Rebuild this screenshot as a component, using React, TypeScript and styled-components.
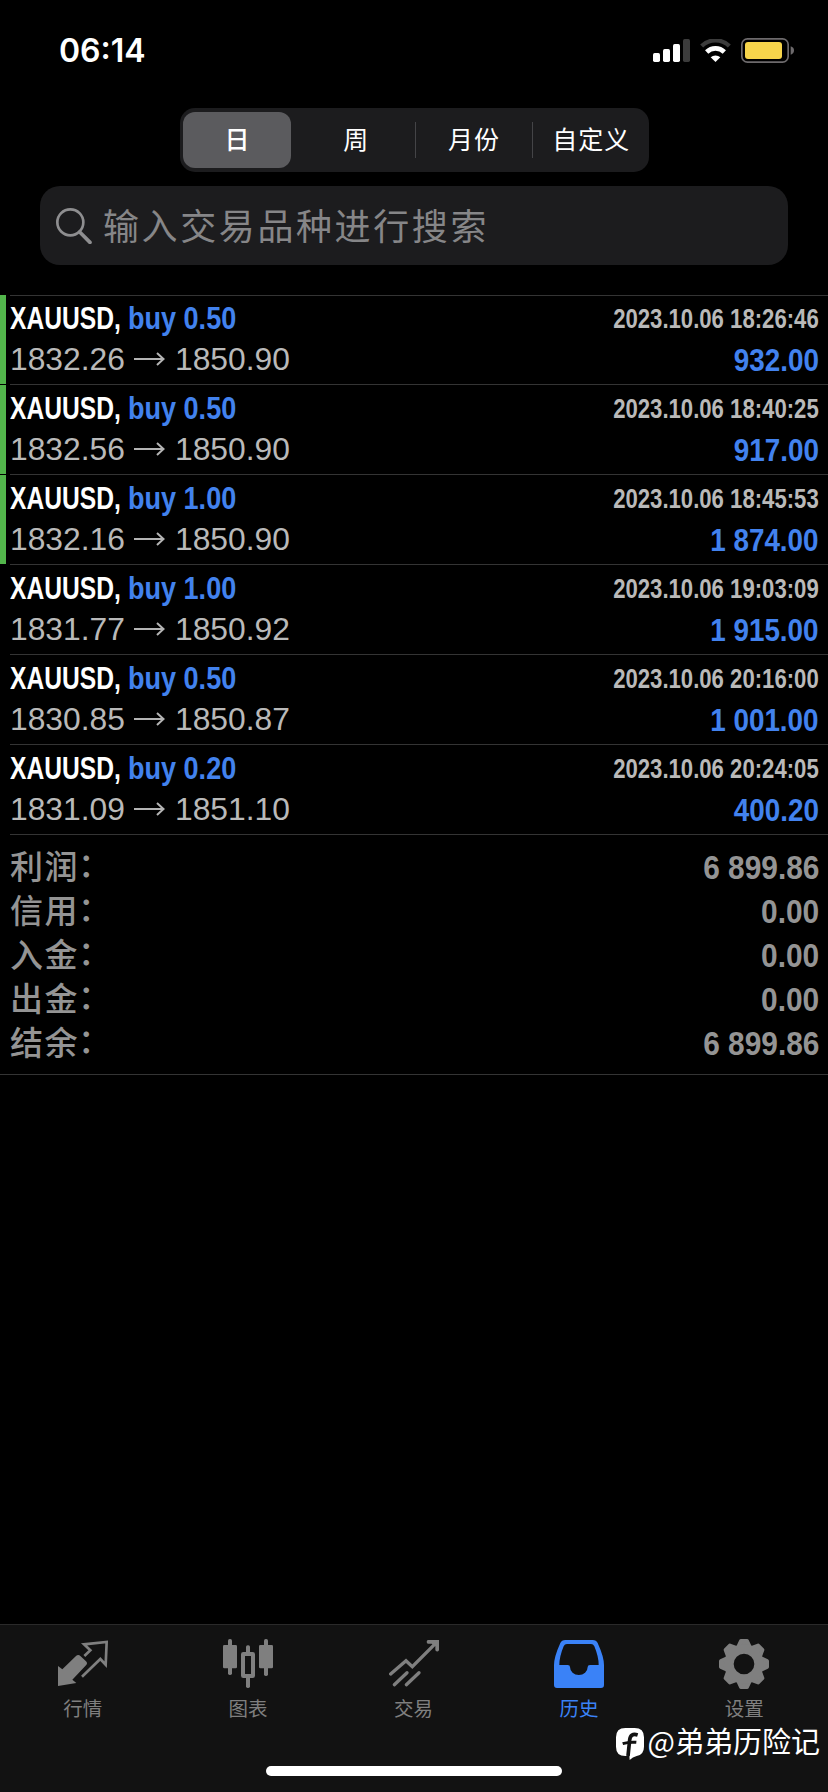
import React from 'react';
import styled, { createGlobalStyle } from 'styled-components';

const deals = [
    { volume: '0.50', open: '1832.26', close: '1850.90', time: '2023.10.06 18:26:46', profit: '932.00', marked: true },
    { volume: '0.50', open: '1832.56', close: '1850.90', time: '2023.10.06 18:40:25', profit: '917.00', marked: true },
    { volume: '1.00', open: '1832.16', close: '1850.90', time: '2023.10.06 18:45:53', profit: '1 874.00', marked: true },
    { volume: '1.00', open: '1831.77', close: '1850.92', time: '2023.10.06 19:03:09', profit: '1 915.00', marked: false },
    { volume: '0.50', open: '1830.85', close: '1850.87', time: '2023.10.06 20:16:00', profit: '1 001.00', marked: false },
    { volume: '0.20', open: '1831.09', close: '1851.10', time: '2023.10.06 20:24:05', profit: '400.20', marked: false },
];

const totals = [
    { label: '利润', value: '6 899.86' },
    { label: '信用', value: '0.00' },
    { label: '入金', value: '0.00' },
    { label: '出金', value: '0.00' },
    { label: '结余', value: '6 899.86' },
];

const tabs = [
    { label: '行情', icon: <QuotesIcon /> },
    { label: '图表', icon: <ChartIcon /> },
    { label: '交易', icon: <TradeIcon /> },
    { label: '历史', icon: <HistoryIcon />, active: true },
    { label: '设置', icon: <SettingsIcon /> },
];

const periods = ['日', '周', '月份', '自定义'];

export default function App() {
    return (
        <>
            <GlobalStyle />
            <Screen>
                <StatusBar>
                    <Clock>06:14</Clock>
                    <StatusIcons>
                        <SignalIcon />
                        <WifiIcon />
                        <BatteryIcon />
                    </StatusIcons>
                </StatusBar>

                <Segmented>
                    {periods.map((period, i) => (
                        <Segment key={period} $active={i === 0} $divided={i > 1}>
                            <span>{period}</span>
                        </Segment>
                    ))}
                </Segmented>

                <SearchField>
                    <SearchIcon />
                    <Placeholder>输入交易品种进行搜索</Placeholder>
                </SearchField>

                <DealList>
                    {deals.map((deal) => (
                        <DealRow key={deal.time}>
                            <Marker $visible={deal.marked} />
                            <DealBody>
                                <DealLine>
                                    <DealTitle>
                                        <SymbolName>
                                            <Condensed $ratio={0.77}>XAUUSD,</Condensed>
                                        </SymbolName>
                                        <Side>
                                            <Condensed $ratio={0.845}>buy {deal.volume}</Condensed>
                                        </Side>
                                    </DealTitle>
                                    <Time>
                                        <Condensed $ratio={0.82} $right>{deal.time}</Condensed>
                                    </Time>
                                </DealLine>
                                <DealLine>
                                    <Prices>
                                        <span>{deal.open}</span>
                                        <ArrowIcon />
                                        <span>{deal.close}</span>
                                    </Prices>
                                    <Profit>
                                        <Condensed $ratio={0.87} $right>{deal.profit}</Condensed>
                                    </Profit>
                                </DealLine>
                            </DealBody>
                        </DealRow>
                    ))}
                </DealList>

                <Totals>
                    <TotalsDivider />
                    {totals.map((row) => (
                        <TotalRow key={row.label}>
                            <TotalLabel>
                                {row.label}
                                <Colon>：</Colon>
                            </TotalLabel>
                            <TotalValue>
                                <Condensed $ratio={0.905} $right>{row.value}</Condensed>
                            </TotalValue>
                        </TotalRow>
                    ))}
                </Totals>

                <TabBar>
                    <Tabs>
                        {tabs.map((tab) => (
                            <Tab key={tab.label} $active={tab.active}>
                                {tab.icon}
                                <TabLabel>{tab.label}</TabLabel>
                            </Tab>
                        ))}
                    </Tabs>
                    <HomeIndicator />
                    <Watermark>
                        <WatermarkLogo />
                        <span>@弟弟历险记</span>
                    </Watermark>
                </TabBar>
            </Screen>
        </>
    );
}

function SignalIcon() {
    return (
        <svg width="37" height="23" viewBox="0 0 111 69" fill="#fff">
            <rect x="0" y="42" width="21" height="27" rx="5" />
            <rect x="30" y="30" width="21" height="39" rx="5" />
            <rect x="60" y="15" width="21" height="54" rx="5" />
            <rect x="90" y="0" width="21" height="69" rx="5" fill="#3c3c3c" />
        </svg>
    );
}

function WifiIcon() {
    return (
        <svg width="31" height="23" viewBox="0 0 93 69">
            <path d="M5 21a60 60 0 0 1 83 0" fill="none" stroke="#3c3c3c" strokeWidth="13" />
            <path d="M20 39a38 38 0 0 1 53 0" fill="none" stroke="#fff" strokeWidth="14" />
            <path d="M46.5 69L32 55a21 21 0 0 1 29 0z" fill="#fff" />
        </svg>
    );
}

function BatteryIcon() {
    return (
        <svg width="53" height="25" viewBox="0 0 159 75">
            <rect x="2.5" y="2.5" width="139" height="70" rx="17" fill="none" stroke="#6d6a6c" strokeWidth="5" />
            <rect x="12" y="12" width="111" height="51" rx="9" fill="#f7d54b" />
            <path d="M149 25q10 3 10 12.500t-10 12.500z" fill="#6d6a6c" />
        </svg>
    );
}

function SearchIcon() {
    return (
        <svg width="36" height="36" viewBox="0 0 108 108" fill="none" stroke="#8e8e90">
            <circle cx="43" cy="43" r="39" strokeWidth="8" />
            <path d="M71 72L102 103" strokeWidth="11" strokeLinecap="round" />
        </svg>
    );
}

function ArrowIcon() {
    return (
        <svg width="31" height="14" viewBox="0 0 31 14" fill="none" stroke="#b4b4b4" strokeWidth="2">
            <path d="M0 7H29.500M23 1L29.500 7L23 13" />
        </svg>
    );
}

function QuotesIcon() {
    return (
        <svg width="50" height="50" viewBox="0 0 150 150">
            <path
                d="M0 81L13 91L54 51Q61 45 68 52L84 67Q90 73 84 79L43 122L55 132L0 141z"
                fill="currentColor"
            />
            <path
                d="M79 51L97 34L78 16L146 9L143 77L127 60L72 113"
                fill="none"
                stroke="currentColor"
                strokeWidth="8"
            />
        </svg>
    );
}

function ChartIcon() {
    return (
        <svg width="50" height="50" viewBox="0 0 150 150" fill="currentColor">
            <rect x="15" y="0" width="12" height="108" rx="5" />
            <rect x="0" y="18" width="42" height="70" rx="4" />
            <rect x="69" y="19" width="12" height="26" rx="5" />
            <rect x="69" y="112" width="12" height="35" rx="5" />
            <rect x="60" y="45" width="30" height="66" rx="1" fill="none" stroke="currentColor" strokeWidth="12" />
            <rect x="123" y="0" width="12" height="111" rx="5" />
            <rect x="108" y="18" width="42" height="70" rx="4" />
        </svg>
    );
}

function TradeIcon() {
    return (
        <svg width="50" height="50" viewBox="0 0 150 150" fill="none" stroke="currentColor" strokeWidth="10" strokeLinecap="round">
            <path d="M5 105L51 65L70 83L142 11" strokeLinejoin="miter" />
            <path d="M16 137L54 101M52 137L90 101" />
            <path d="M116 3H150V34Q145 41 139 34V22L128 14H116Q110 9 116 3z" fill="currentColor" stroke="none" />
        </svg>
    );
}

function HistoryIcon() {
    return (
        <svg width="50" height="50" viewBox="0 0 150 150" fill="currentColor" fillRule="evenodd">
            <path d="M34 3H116Q127 3 131 12Q150 54 150 78V138Q150 147 141 147H9Q0 147 0 138V78Q0 54 19 12Q23 3 34 3zM39 15Q32 15 29 22Q16 53 16 78H41Q48 78 48 84A26.500 24 0 0 0 101 84Q101 78 108 78H134Q134 53 121 22Q118 15 111 15z" />
        </svg>
    );
}

function SettingsIcon() {
    return (
        <svg width="50" height="50" viewBox="0 0 150 150" fill="currentColor">
            {[0, 45, 90, 135, 180, 225, 270, 315].map((angle) => (
                <path
                    key={angle}
                    d="M66 6H84L93 26H57z"
                    stroke="currentColor"
                    strokeWidth="12"
                    strokeLinejoin="round"
                    transform={`rotate(${angle} 75 75)`}
                />
            ))}
            <circle cx="75" cy="75" r="45" fill="none" stroke="currentColor" strokeWidth="28" />
        </svg>
    );
}

function WatermarkLogo() {
    return (
        <svg width="28" height="32" viewBox="0 0 84 96">
            <path d="M28 0H56Q84 0 84 28V56Q84 80 62 84Q50 87 41 96L40 84H28Q0 84 0 56V28Q0 0 28 0z" fill="#fff" />
            <path d="M65 21Q43 14 41 36L36 84" fill="none" stroke="#121212" strokeWidth="11" />
            <path d="M20 47Q40 41 61 43" fill="none" stroke="#121212" strokeWidth="9" />
        </svg>
    );
}

const GlobalStyle = createGlobalStyle`
    * {
        box-sizing: border-box;
    }

    body {
        margin: 0;
        background: #000;
        font-family: 'Liberation Sans', 'Noto Sans CJK SC', sans-serif;
    }

    svg {
        display: block;
        flex: none;
    }
`;

const Screen = styled.div`
    display: flex;
    flex-direction: column;
    width: 828px;
    height: 1792px;
    overflow: hidden;
    background: #000;
    color: #fff;
`;

const StatusBar = styled.header`
    display: flex;
    align-items: center;
    justify-content: space-between;
    height: 100px;
    margin-bottom: 8px;
    padding: 0 34px 0 59px;
`;

const Clock = styled.span`
    font-family: Inter, sans-serif;
    font-size: 32px;
    font-weight: 600;
`;

const StatusIcons = styled.div`
    display: flex;
    align-items: center;
    gap: 10px;
`;

const Segmented = styled.div`
    display: flex;
    flex: none;
    width: 469px;
    height: 64px;
    margin-left: 180px;
    background: #1c1c1e;
    border-radius: 15px;
`;

const Segment = styled.div<{ $active: boolean; $divided: boolean }>`
    display: flex;
    align-items: center;
    width: 25%;
    padding: ${(props) => (props.$active ? '4px 6px 4px 3px' : '14px 0')};

    span {
        display: flex;
        flex: 1;
        align-items: center;
        justify-content: center;
        height: 100%;
        padding-bottom: 3px;
        padding-left: 1px;
        background: ${(props) => (props.$active ? '#5b5b5e' : 'none')};
        border-left: ${(props) => (props.$divided ? '1px solid #444447' : 'none')};
        border-radius: ${(props) => (props.$active ? '12px' : '0')};
        font-family: 'Noto Sans CJK SC', sans-serif;
        font-size: 25px;
        font-weight: ${(props) => (props.$active ? 500 : 400)};
        letter-spacing: 1px;
        line-height: 1;
    }
`;

const SearchField = styled.div`
    display: flex;
    flex: none;
    align-items: center;
    gap: 11px;
    height: 79px;
    margin: 14px 40px 30px;
    padding-left: 16px;
    background: #1c1c1e;
    border-radius: 20px;
`;

const Placeholder = styled.span`
    padding-bottom: 4px;
    color: #868688;
    font-family: 'Noto Sans CJK SC', sans-serif;
    font-size: 36px;
    letter-spacing: 2.6px;
    line-height: 1;
`;

const DealList = styled.div`
    display: flex;
    flex: none;
    flex-direction: column;
`;

const Marker = styled.div<{ $visible: boolean }>`
    width: 6px;
    margin-top: 1px;
    background: ${(props) => (props.$visible ? '#52b54b' : 'none')};
`;

const DealBody = styled.div`
    flex: 1;
    padding-top: 1px;
    padding-right: 9px;
    border-top: 1px solid #343434;
`;

const DealRow = styled.div`
    display: flex;
    gap: 4px;
    height: 90px;

    &:first-child {
        height: 89px;
    }

    &:first-child ${Marker} {
        margin-top: 0;
    }

    &:first-child ${DealBody} {
        padding-top: 0;
    }
`;

const DealLine = styled.div`
    display: flex;
    align-items: center;
    justify-content: space-between;
    height: 42px;
    white-space: nowrap;
`;

// Keeps the glyph height and narrows the letters towards one edge.
const Condensed = styled.span<{ $ratio: number; $right?: boolean }>`
    display: inline-block;
    transform: scaleX(${(props) => props.$ratio});
    transform-origin: ${(props) => (props.$right ? 'right' : 'left')} center;
`;

const DealTitle = styled.div`
    display: flex;
    padding-top: 2px;
    font-size: 32px;
    font-weight: 700;
`;

const SymbolName = styled.span`
    width: 118px;
`;

const Side = styled.span`
    color: #4282ee;
`;

const Time = styled.div`
    padding-top: 4px;
    color: #b9b9b9;
    font-size: 27px;
    font-weight: 700;
`;

const Prices = styled.div`
    display: flex;
    align-items: center;
    gap: 9.5px;
    color: #b9b9b9;
    font-size: 31.8px;
`;

const Profit = styled.div`
    padding-top: 2px;
    color: #4282ee;
    font-size: 32px;
    font-weight: 700;
`;

const Totals = styled.div`
    flex: none;
    height: 241px;
    padding-left: 10px;
    border-bottom: 1px solid #343434;
`;

const TotalsDivider = styled.div`
    height: 1px;
    margin-bottom: 9px;
    background: #343434;
`;

const TotalRow = styled.div`
    display: flex;
    align-items: center;
    justify-content: space-between;
    height: 44px;
    padding-right: 9px;
    color: #949494;
`;

const TotalLabel = styled.span`
    padding-bottom: 1px;
    font-family: 'Noto Sans CJK SC', sans-serif;
    font-size: 33px;
    font-weight: 500;
    letter-spacing: 1.5px;
    line-height: 1;
`;

const Colon = styled.span`
    display: inline-block;
    transform: translate(-1px, -2px);
`;

const TotalValue = styled.span`
    padding-top: 3px;
    font-size: 33px;
    font-weight: 700;
`;

const TabBar = styled.nav`
    position: relative;
    display: flex;
    flex-direction: column;
    align-items: center;
    justify-content: space-between;
    height: 168px;
    margin-top: auto;
    padding: 14px 0 16px;
    background: #121212;
    border-top: 1px solid #2a2a2a;
`;

const Tabs = styled.div`
    display: flex;
    width: 100%;
    padding-right: 1px;
`;

const Tab = styled.div<{ $active?: boolean }>`
    display: flex;
    flex: 1;
    flex-direction: column;
    align-items: center;
    gap: 9px;
    color: ${(props) => (props.$active ? '#3a82f7' : '#7f7f7f')};
`;

const TabLabel = styled.span`
    font-family: 'Noto Sans CJK SC', sans-serif;
    font-size: 19.5px;
    line-height: 20px;
`;

const HomeIndicator = styled.div`
    width: 296px;
    height: 10px;
    background: #fff;
    border-radius: 5px;
`;

const Watermark = styled.div`
    position: absolute;
    right: 8px;
    top: 103px;
    display: flex;
    align-items: flex-start;
    gap: 4px;
    font-family: 'Noto Sans CJK SC', sans-serif;
    font-size: 29px;
    line-height: 24px;
`;
